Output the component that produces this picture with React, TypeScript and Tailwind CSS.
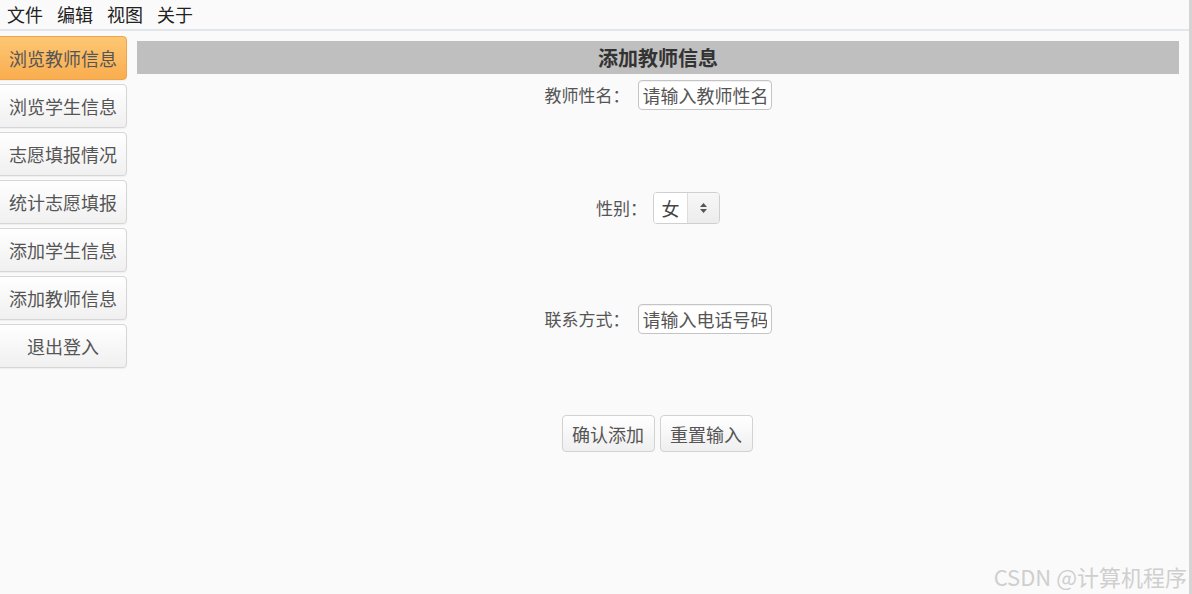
import React from "react";

const cjk = { fontFamily: '"Noto Sans CJK SC", "Noto Sans", sans-serif' };

const navItems = [
  "浏览教师信息",
  "浏览学生信息",
  "志愿填报情况",
  "统计志愿填报",
  "添加学生信息",
  "添加教师信息",
  "退出登入",
];

function SideButton({ label, active }: { label: string; active?: boolean }) {
  return (
    <button
      className={
        "ml-[-4px] w-[131px] h-[44px] rounded-[4px] border text-[18px] leading-none text-[#555] flex items-center justify-center shadow-[0_1px_1px_rgba(0,0,0,0.05)] " +
        (active
          ? "border-[#eda44a] bg-gradient-to-b from-[#fdc774] to-[#f9ad4e]"
          : "border-[#d6d6d6] bg-gradient-to-b from-[#ffffff] to-[#f0f0f0]")
      }
    >
      <span className="pl-[3px]">{label}</span>
    </button>
  );
}

function TextField({ placeholder }: { placeholder: string }) {
  return (
    <input
      placeholder={placeholder}
      className="w-[134px] h-[30px] rounded-[4px] border border-[#c4c4c4] bg-white px-[4px] text-[18px] text-[#555] placeholder:text-[#555] outline-none shadow-[inset_0_1px_1px_rgba(0,0,0,0.06)]"
      style={cjk}
    />
  );
}

function GenderSelect() {
  return (
    <div className="flex h-[32px] w-[67px] rounded-[4px] border border-[#cfcfcf] overflow-hidden">
      <div className="w-[34px] bg-white flex items-center justify-center text-[18px] text-[#444] border-r border-[#dcdcdc]">
        女
      </div>
      <div className="flex-1 bg-gradient-to-b from-[#f7f7f7] to-[#ececec] flex items-center justify-center">
        <svg width="7" height="10" viewBox="0 0 7 10">
          <path d="M3.5 0 L7 4 H0 Z" fill="#555" />
          <path d="M3.5 10 L7 6 H0 Z" fill="#555" />
        </svg>
      </div>
    </div>
  );
}

function ActionButton({ label }: { label: string }) {
  return (
    <button className="w-[93px] h-[37px] rounded-[4px] border border-[#d2d2d2] bg-gradient-to-b from-[#ffffff] to-[#efefef] text-[18px] text-[#555] leading-none">
      {label}
    </button>
  );
}

export default function App() {
  return (
    <div
      className="relative w-[1192px] h-[594px] overflow-hidden bg-[#fafafa] border-r-[3px] border-[#d4d4d4]"
      style={cjk}
    >
      {/* menu bar */}
      <div className="h-[31px] border-b-2 border-[#e2e6ea] flex items-center gap-[14px] pl-[7px] text-[18px] text-[#222]">
        <span>文件</span>
        <span>编辑</span>
        <span>视图</span>
        <span>关于</span>
      </div>

      <div className="flex">
        {/* side navigation */}
        <div className="w-[127px] pt-[5px] flex flex-col gap-[4px]">
          {navItems.map((item, i) => (
            <SideButton key={item} label={item} active={i === 0} />
          ))}
        </div>

        {/* main form */}
        <div className="flex-1 pt-[10px] pl-[10px] pr-[10px]">
          <div className="h-[33px] bg-[#bfbfbf] flex items-center justify-center text-[20px] font-bold text-[#333]">
            添加教师信息
          </div>

          <div className="mt-[6px] flex items-center justify-center">
            <span className="text-[17px] text-[#555] mr-[8px]">教师性名：</span>
            <TextField placeholder="请输入教师性名" />
          </div>

          <div className="mt-[82px] flex items-center justify-center">
            <span className="text-[17px] text-[#555] mr-[6px]">性别：</span>
            <GenderSelect />
          </div>

          <div className="mt-[80px] flex items-center justify-center">
            <span className="text-[17px] text-[#555] mr-[8px]">联系方式：</span>
            <TextField placeholder="请输入电话号码" />
          </div>

          <div className="mt-[81px] flex items-center justify-center gap-[5px] pr-[2px]">
            <ActionButton label="确认添加" />
            <ActionButton label="重置输入" />
          </div>
        </div>
      </div>

      {/* watermark */}
      <div className="absolute right-[2px] bottom-[7px] text-[22px] text-[#cfcfcf] leading-none">
        CSDN @计算机程序
      </div>
    </div>
  );
}
